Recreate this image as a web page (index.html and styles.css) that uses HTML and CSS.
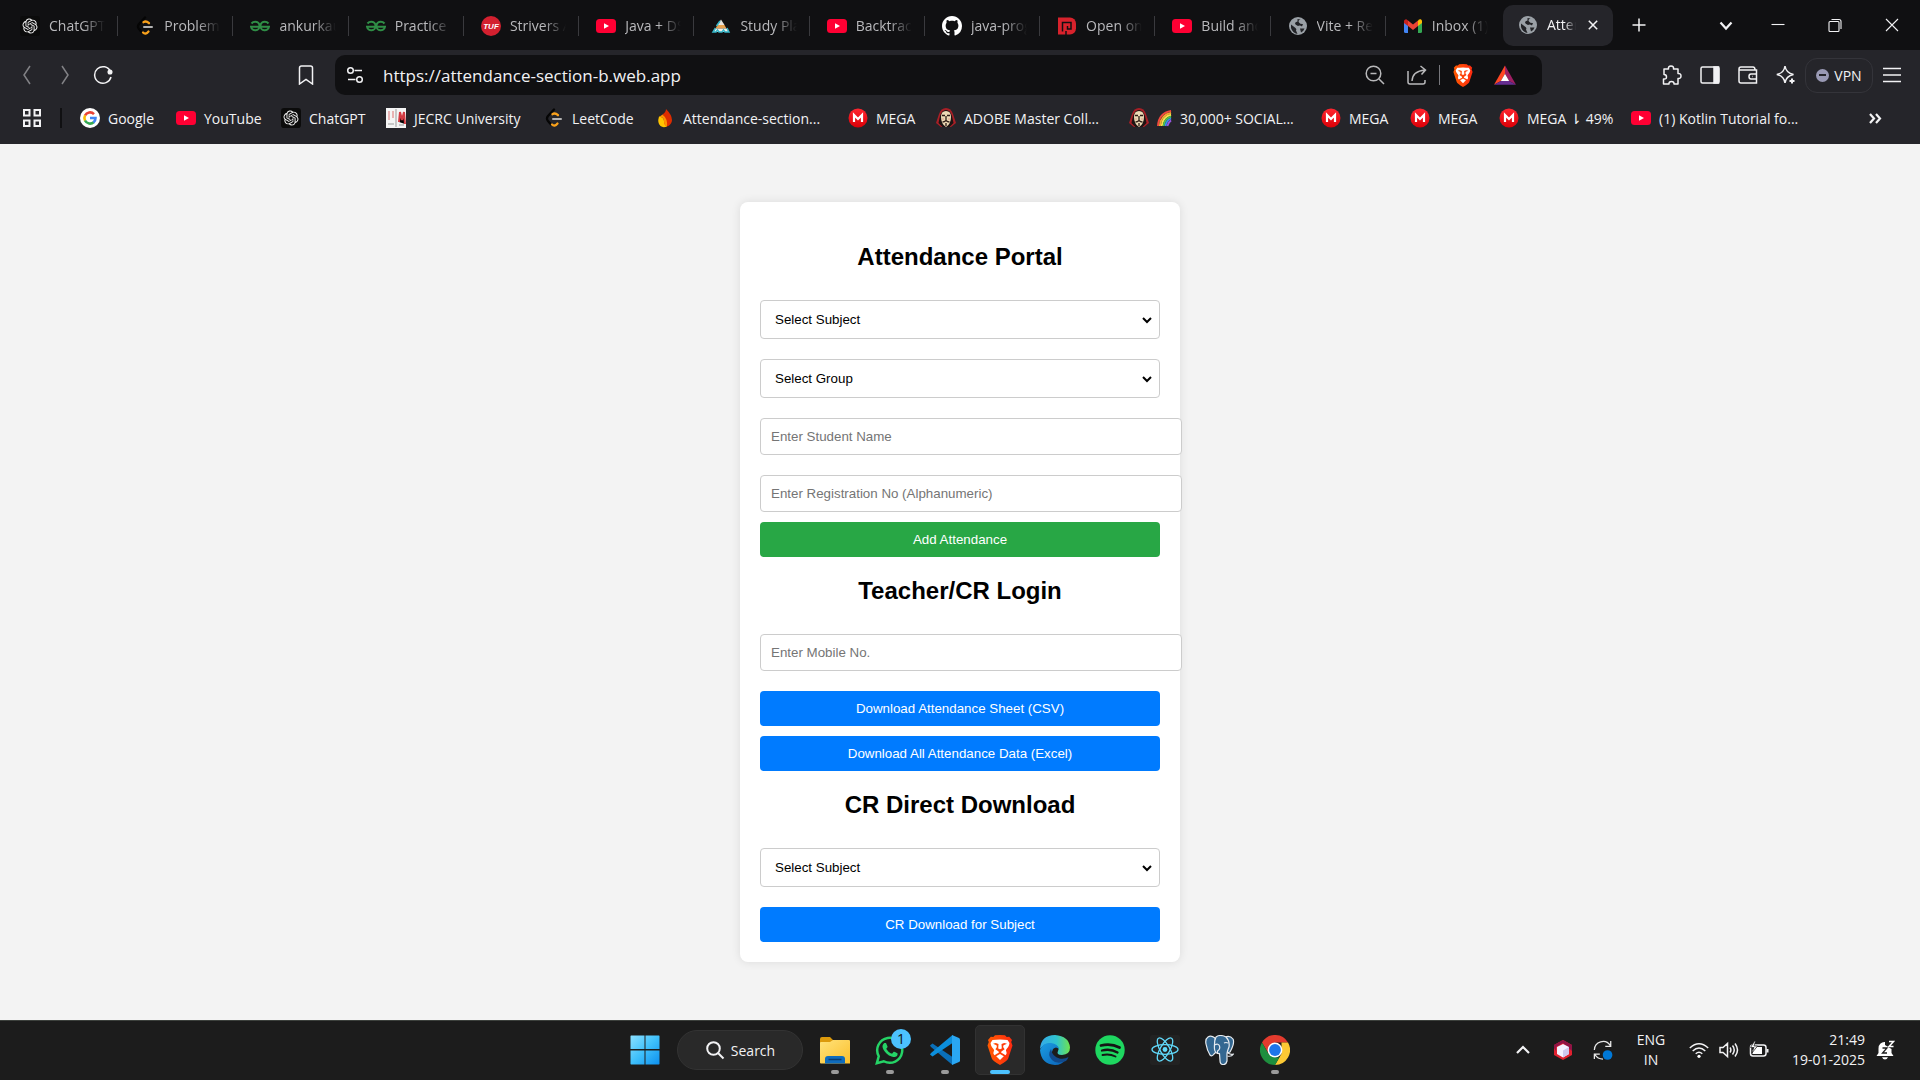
FILE: index.html
```html
<!DOCTYPE html>
<html lang="en">
<head>
<meta charset="utf-8">
<title>Attendance Portal</title>
<link rel="stylesheet" href="styles.css">
</head>
<body>
<svg class="sprite" aria-hidden="true">
  <defs>
    <linearGradient id="g-win" x1="0" y1="0" x2="1" y2="1"><stop offset="0" stop-color="#8be0ff"/><stop offset=".5" stop-color="#3fc0fb"/><stop offset="1" stop-color="#0d90ee"/></linearGradient>
    <linearGradient id="g-brave" x1="0" x2="1"><stop offset="0" stop-color="#ff5a00"/><stop offset="1" stop-color="#ff2a10"/></linearGradient>
    <linearGradient id="g-folder" x1="0" y1="0" x2="1" y2="1"><stop offset="0" stop-color="#ffe27a"/><stop offset="1" stop-color="#fbc02d"/></linearGradient>
    <linearGradient id="g-edge1" x1="0" y1="0" x2="1" y2="0"><stop offset="0" stop-color="#35a9e8"/><stop offset=".55" stop-color="#2fc3cf"/><stop offset="1" stop-color="#6fe34f"/></linearGradient>
    <linearGradient id="g-edge2" x1="0" y1="0" x2="1" y2="1"><stop offset="0" stop-color="#1b9de2"/><stop offset="1" stop-color="#0a62b8"/></linearGradient>
    <linearGradient id="g-mega" x1="0" y1="0" x2="0" y2="1"><stop offset="0" stop-color="#ff2630"/><stop offset="1" stop-color="#d90007"/></linearGradient>

    <symbol id="openai" viewBox="-4 -4 32 32"><rect x="-4" y="-4" width="32" height="32" rx="5" fill="#0b0b0b"/><path fill="#f2f2f2" d="M22.28 9.82a5.98 5.98 0 0 0-.52-4.91 6.05 6.05 0 0 0-6.51-2.9A6.07 6.07 0 0 0 4.98 4.18a5.98 5.98 0 0 0-4 2.9 6.05 6.05 0 0 0 .74 7.1 5.98 5.98 0 0 0 .51 4.91 6.05 6.05 0 0 0 6.52 2.9A5.98 5.98 0 0 0 13.26 24a6.06 6.06 0 0 0 5.77-4.2 5.99 5.99 0 0 0 4-2.9 6.06 6.06 0 0 0-.75-7.08zm-9.02 12.61a4.48 4.48 0 0 1-2.88-1.04l.14-.08 4.78-2.76a.8.8 0 0 0 .4-.68v-6.74l2.02 1.17a.07.07 0 0 1 .04.05v5.58a4.5 4.5 0 0 1-4.5 4.5zM3.6 18.3a4.47 4.47 0 0 1-.53-3.01l.14.08 4.78 2.76a.77.77 0 0 0 .78 0l5.85-3.37v2.33a.08.08 0 0 1-.04.07l-4.84 2.79A4.5 4.5 0 0 1 3.6 18.3zM2.34 7.9a4.49 4.49 0 0 1 2.37-1.98V11.6a.77.77 0 0 0 .38.68l5.82 3.35-2.02 1.17a.08.08 0 0 1-.07 0l-4.83-2.79A4.5 4.5 0 0 1 2.34 7.87zm16.6 3.85L13.1 8.36l2.02-1.16a.08.08 0 0 1 .07 0l4.83 2.79a4.49 4.49 0 0 1-.68 8.1v-5.67a.79.79 0 0 0-.4-.67zm2.01-3.02l-.14-.09-4.78-2.78a.78.78 0 0 0-.78 0L9.41 9.23V6.9a.07.07 0 0 1 .03-.06l4.83-2.79a4.5 4.5 0 0 1 6.68 4.66zM8.31 12.86l-2.02-1.16a.08.08 0 0 1-.04-.06V6.07a4.5 4.5 0 0 1 7.37-3.45l-.14.08L8.7 5.46a.8.8 0 0 0-.39.68zm1.1-2.36 2.6-1.5 2.6 1.5v3l-2.6 1.5-2.6-1.5z"/></symbol>
    <symbol id="leetcode" viewBox="0 0 20 20"><g fill="none" stroke-width="2.3" stroke-linecap="round"><path stroke="#050505" d="M10 1.5 4 8Q2 10.500 4 13l3 3.500"/><path stroke="#f9a11b" d="M8.500 6.200Q11 4.300 14 7.200M8 16.500Q10.500 19 13.500 15.500"/><path stroke="#b3b3b3" stroke-width="2" d="M9 11h8"/></g></symbol>
    <symbol id="gfg" viewBox="0 0 20 20"><g fill="none" stroke="#2f8d46" stroke-width="2"><path d="M1.500 7.500Q3 5.700 5.200 5.700a4.300 4.300 0 1 1-4.200 5H19a4.300 4.300 0 1 1-4.200-5Q17 5.700 18.500 7.500"/></g></symbol>
    <symbol id="tuf" viewBox="0 0 20 20"><circle cx="10" cy="10" r="10" fill="#d3202f"/><text x="10" y="13" text-anchor="middle" font-family="Liberation Sans" font-size="8" font-weight="700" font-style="italic" fill="#fff">TUF</text></symbol>
    <symbol id="youtube" viewBox="0 0 20 20"><rect y="3" width="20" height="14" rx="3.500" fill="#ff0033"/><path d="m8 7.300 5 2.700-5 2.700z" fill="#fff"/></symbol>
    <symbol id="pyramid" viewBox="0 0 20 20"><path d="M10 3.500 13.500 9h-7z" fill="#e9e4dc"/><path d="M6.500 9h7l2 3.500h-11z" fill="#e7a24f"/><path d="M4.500 12.500h11L18 16H2z" fill="#f4f1ea"/><path d="m9 5-3.500 5M4.500 12 2 16h3l1.500-2 1.500 2h3l1.500-2 1.500 2h4l-2-4" fill="none" stroke="#35b6c9" stroke-width="1.500"/></symbol>
    <symbol id="github" viewBox="0 0 16 16"><path fill="#fff" d="M8 0C3.580 0 0 3.580 0 8c0 3.540 2.290 6.530 5.470 7.590.4.070.55-.17.55-.38 0-.19-.01-.82-.01-1.490-2.010.37-2.530-.49-2.690-.94-.09-.23-.48-.94-.82-1.130-.28-.15-.68-.52-.01-.53.63-.01 1.080.58 1.230.82.72 1.210 1.870.87 2.330.66.07-.52.28-.87.51-1.070-1.780-.2-3.640-.89-3.640-3.950 0-.87.31-1.590.82-2.150-.08-.2-.36-1.020.08-2.120 0 0 .67-.21 2.200.82.64-.18 1.320-.27 2-.27s1.360.09 2 .27c1.530-1.040 2.200-.82 2.200-.82.44 1.100.16 1.920.08 2.120.51.56.82 1.270.82 2.150 0 3.070-1.870 3.750-3.650 3.950.29.25.54.73.54 1.480 0 1.070-.01 1.930-.01 2.200 0 .21.15.46.55.38A8.010 8.010 0 0 0 16 8c0-4.420-3.580-8-8-8z"/></symbol>
    <symbol id="pepcoding" viewBox="0 0 20 20"><path d="M1 1.500h12a6 6 0 0 1 6 6v5a6 6 0 0 1-6 6H1z" fill="#d8222c"/><path d="M5.500 15.500v-9H14v6.500h-3.500V10M9 19v-4" fill="none" stroke="#101012" stroke-width="1.500"/></symbol>
    <symbol id="globe" viewBox="0 0 20 20"><circle cx="10" cy="10" r="9" fill="#9aa0a6"/><path fill="#222327" d="M3 8.500 7.500 12q1.500 1 .5 2.500l1.500 3.400Q4.500 17 3 12zM9.500 3l3 .5q-3 1-1.500 3t4 1.500l-1 2.500q-2-1.500-4-.5-3-1.500-3-2.500 0-1.500 2.500-2z"/><path fill="#222327" d="M12 12.500h4.500q-1 3-3.500 4z"/></symbol>
    <symbol id="gmail" viewBox="0 0 20 20"><path fill="#4285f4" d="M1 6v9.500a1.500 1.500 0 0 0 1.500 1.500H5V9z"/><path fill="#34a853" d="M15 9v8h2.500a1.500 1.500 0 0 0 1.500-1.500V6z"/><path fill="#fbbc04" d="M15 4.500V10l4-3V5a2 2 0 0 0-3.300-1.300z"/><path fill="#ea4335" d="M5 10V4.500l5 4 5-4V10l-5 4z"/><path fill="#c5221f" d="M1 5v2l4 3V4.500l-.7-.6A2 2 0 0 0 1 5z"/></symbol>
    <symbol id="google" viewBox="0 0 20 20"><circle cx="10" cy="10" r="10" fill="#fff"/><g fill="none" stroke-width="2.600"><path stroke="#ea4335" d="M14 6.100A5.600 5.600 0 0 0 5 7.500"/><path stroke="#fbbc04" d="M5.100 7.300a5.600 5.600 0 0 0 0 5.400"/><path stroke="#34a853" d="M5 12.500a5.600 5.600 0 0 0 8.800 1.600"/><path stroke="#4285f4" d="M13.500 14.400a5.600 5.600 0 0 0 2-4.400H10"/></g></symbol>
    <symbol id="jecrc" viewBox="0 0 20 20"><path fill="#f5f5f5" d="M0 0h20v20H0z"/><path stroke="#e9b3b3" stroke-width="2" d="M3 3v9M7 3v7"/><path stroke="#d33b43" stroke-width="2" d="m13 14 1-10 2 8 2-8 1 12"/><path stroke="#b9b9b9" stroke-width="1.500" d="M2 16h6M10 1v18M13 17h5"/></symbol>
    <symbol id="firebase" viewBox="0 0 20 20"><path fill="#dd2c00" d="M11 1q6 6 6 11a6.500 6.500 0 0 1-9 6Q11 10 7.500 6.500 11 4 11 1z"/><path fill="#ffc400" d="M4 8.500Q9 9 9 13t3 5.500Q8 20 5.500 18 2 15 4 8.500z"/><path fill="#ff9100" d="M7.500 6.500Q6 8 4 8.500 9 9 9 13t3 5.500Q13 11 7.500 6.500z"/></symbol>
    <symbol id="mega" viewBox="0 0 20 20"><circle cx="10" cy="10" r="9.500" fill="url(#g-mega)"/><path fill="none" stroke="#fff" stroke-width="2.200" d="M6 14V7l4 4 4-4v7"/></symbol>
    <symbol id="mask" viewBox="0 0 20 20"><path fill="#a81f26" d="M10 0q5 0 7 6l3 9-5 4H5l-5-4 3-9q2-6 7-6z"/><path fill="#1c1413" d="M10 2q4 0 6 6l1.500 7-4 4h-7l-4-4L4 8q2-6 6-6z"/><path fill="#ecd9b4" d="M10 3q5 0 5 6 0 7-5 10-5-3-5-10 0-6 5-6z"/><path stroke="#2c1b16" stroke-width="1.300" fill="none" d="M6 7.500h3m2 0h3M6.500 14q2 0 3.500-1.500 1.500 1.500 3.500 1.500M10 8v4M10 15v3"/><path stroke="#c66" d="M6.500 11h1m5 0h1"/></symbol>
    <symbol id="rainbow" viewBox="0 0 16 18"><g fill="none" stroke-width="2"><path stroke="#f0483e" d="M1 17Q2 3 15 1"/><path stroke="#f8a530" d="M3 17Q4 5 15 3"/><path stroke="#f7e04b" d="M5 17Q6 7 15 5"/><path stroke="#49c552" d="M7 17Q8 9 15 7"/><path stroke="#3b8ff3" d="M9 17q1-6 6-8"/><path stroke="#9656e0" d="M11 17q1-4 4-6"/></g></symbol>

    <symbol id="lion" viewBox="0 0 26 30"><path d="m13 0 5 .2 1.700 1.800 2.500-.2L25 5l-.8 2 1.300 3.500-4.300 13Q20.500 25.500 13 30q-7.500-4.500-8.200-6.500L.5 10.500 1.800 7 1 5l2.800-3.200 2.500.2L8 .2z" fill="url(#g-brave)"/><path fill="#fff" d="m13 4.500 4 .3 3.500.2 2 3-.5 2.200q-.3 1.300-2.800 4.300-.7 1 .3 2.500.6 1.800-1 3.200l-2.300-1.400-2-1 .2-1.200 3.200-2.300-1.500-2.300.4-1.800 3.500-1.500-2.800-.6L14.500 9l.3 4.500-1.800.8-1.800-.8.3-4.500-2.700-.9-2.800.6L9.500 10.200l.4 1.800-1.500 2.300 3.200 2.300.2 1.200-2 1-2.300 1.400q-1.600-1.400-1-3.200 1-1.500.3-2.500Q4.300 11.500 4 10.200L3.500 8l2-3 3.500-.2z"/><path fill="#fff" d="m13 19 3.800 2.300L13 25l-3.800-3.700z"/></symbol>
    <symbol id="bat" viewBox="0 0 24 22"><path fill="#ff4724" d="M12 0 0 21l7.500-4L12 9z"/><path fill="#9e1f63" d="m12 0 12 21-7.500-4L12 9z"/><path fill="#662d91" d="M0 21h24l-7.500-4h-9z"/><path fill="#fff" d="m12 9 4.500 8h-9z"/></symbol>

    <symbol id="back" viewBox="0 0 20 20"><path d="M13 1 7 10l6 9"/></symbol>
    <symbol id="forward" viewBox="0 0 20 20"><path d="m7 1 6 9-6 9"/></symbol>
    <symbol id="reload" viewBox="0 0 20 20"><path d="M17.500 6.500A8.300 8.300 0 1 0 18 12"/><circle cx="17" cy="7" r="1.800" fill="#f2f2f4"/></symbol>
    <symbol id="flag" viewBox="0 0 20 20"><path d="M3.500 3q0-2 2-2h9q2 0 2 2v16L10 14.500 3.500 19z"/></symbol>
    <symbol id="sliders" viewBox="0 0 20 20"><circle cx="5.500" cy="5.500" r="2.800"/><path d="M9.500 5.500H17"/><circle cx="14.500" cy="14.500" r="2.800"/><path d="M3 14.500h7.500"/></symbol>
    <symbol id="zoomout" viewBox="0 0 20 20"><circle cx="8.500" cy="8.500" r="7.300"/><path d="m14 14 5 5M5.500 8.500h6"/></symbol>
    <symbol id="share" viewBox="0 0 20 20"><path d="M1 6v11q0 2 2 2h13q2 0 2-2v-2M5 16q.5-10 13-11M13.500 1 18.500 5l-4 4.500"/></symbol>
    <symbol id="puzzle" viewBox="0 0 20 20"><path stroke-linejoin="round" d="M2 4h4.500q-.5-3 2.500-3t2.500 3H16v4.500q3-.2 3 2.500t-3 2.500V19h-4q.2-2.500-2.500-2.500T7 19H1.500v-5q3 .5 3-2T2 9.500z"/></symbol>
    <symbol id="panel" viewBox="0 0 20 20"><rect x="1" y="2" width="18" height="16" rx="1.500"/><path d="M14 2h4.500v16H14z" fill="#f2f2f4"/></symbol>
    <symbol id="wallet" viewBox="0 0 20 20"><path d="M1 4q0-2 2-2h12q2 0 2 3h1.500V18H3q-2 0-2-2zM1 5h16M19 9h-6q-2 0-2 2.500T13 14h6M14 11.500h.5"/></symbol>
    <symbol id="sparkle" viewBox="0 0 20 20"><path d="M9 1q1 7 8.500 8.500Q10 11 9 18 8 11 .8 9.500 8 8 9 1z"/><path d="M16 13.500v5M13.500 16h5" stroke-width="2"/></symbol>
    <symbol id="menu" viewBox="0 0 20 20"><path d="M1 3.500h18M1 10h18M1 16.500h18"/></symbol>
    <symbol id="apps" viewBox="0 0 20 20"><path d="M2 2h5.500v5.500H2zM12.500 2H18v5.500h-5.500zM2 12.500h5.500V18H2zM12.500 12.500H18V18h-5.500z" stroke-width="2"/></symbol>
    <symbol id="more" viewBox="0 0 20 20"><path d="m5 6 4 4.500L5 15m6-9 4 4.500-4 4.500"/></symbol>
    <symbol id="plus" viewBox="0 0 20 20"><path d="M10 3.500v13M3.500 10h13"/></symbol>
    <symbol id="down" viewBox="0 0 20 20"><path d="m4.500 7.500 5.500 6 5.500-6"/></symbol>
    <symbol id="up" viewBox="0 0 20 20"><path d="m4 13 6-6 6 6"/></symbol>
    <symbol id="minimize" viewBox="0 0 20 20"><path d="M3.500 9.500h13"/></symbol>
    <symbol id="restore" viewBox="0 0 20 20"><rect x="4" y="6.500" width="10" height="10" rx="1"/><path d="M6.500 4.500H14q2 0 2 2V14"/></symbol>
    <symbol id="close" viewBox="0 0 20 20"><path d="m4 4 12 12M16 4 4 16"/></symbol>

    <symbol id="windows" viewBox="0 0 30 30"><path fill="url(#g-win)" d="M1 .5h13.500V14H.5V1zM15.500.5H29L29.500 1v13h-14zM.5 15.500h14V29.500H1l-.5-.5zM15.500 15.500h14V29l-.5.5H15.500z"/></symbol>
    <symbol id="explorer" viewBox="0 0 30 30"><path fill="#dc9a0c" d="M0 4q0-2 2-2h8l3 3h15v6H0z"/><path fill="url(#g-folder)" d="M0 8q0-1 1-1h9l3-2h16q1 0 1 1v22.500H1q-1 0-1-1z"/><path fill="#0f6cbd" d="M5 28.500V24q0-3 3-3h14q3 0 3 3v4.500z"/><path stroke="#0a3d73" stroke-width="1.500" d="M8.500 24.500h13"/></symbol>
    <symbol id="whatsapp" viewBox="0 0 24 24"><path fill="none" stroke="#25d366" stroke-width="2" d="M1.500 22.500 3 17a10 10 0 1 1 4 4z"/><path fill="#25d366" d="M17.472 14.382c-.297-.149-1.758-.867-2.030-.967-.273-.099-.471-.148-.670.150-.197.297-.767.966-.940 1.164-.173.199-.347.223-.644.075-.297-.150-1.255-.463-2.390-1.475-.883-.788-1.480-1.761-1.653-2.059-.173-.297-.018-.458.130-.606.134-.133.298-.347.446-.520.149-.174.198-.298.298-.497.099-.198.050-.371-.025-.520-.075-.149-.669-1.612-.916-2.207-.242-.579-.487-.5-.669-.510-.173-.008-.371-.010-.570-.010-.198 0-.520.074-.792.372-.272.297-1.040 1.016-1.040 2.479 0 1.462 1.065 2.875 1.213 3.074.149.198 2.096 3.200 5.077 4.487.709.306 1.262.489 1.694.625.712.227 1.360.195 1.871.118.571-.085 1.758-.719 2.006-1.413.248-.694.248-1.289.173-1.413-.074-.124-.272-.198-.570-.347"/></symbol>
    <symbol id="vscode" viewBox="0 0 30 30"><path fill="#0a6fb8" d="M0 10.500 2.500 8.500l20 13.500v8L1 12z"/><path fill="#0c8fdc" d="M0 19.500 2.500 21.500 22.500 8V0L1 18z"/><path fill="#2aa7f3" d="m22 0 7 3q1 .5 1 1.500v21q0 1-1 1.500l-7 3z"/></symbol>
    <symbol id="edge" viewBox="0 0 30 30"><path fill="url(#g-edge1)" d="M0 14Q1 0 15 0q14 1 15 12.500 0 7-8 7.500-6 0-4-4 2-3.500-3-6Q6 6 0 14z"/><path fill="url(#g-edge2)" d="M0 15Q3 7 11 8q7 1 8 6-3-3-6 0-3 6 2 10 5 3 11 0-4 6-11 6Q1 29 0 15z"/><path fill="#114a8c" d="M11 14q-4 6 1 11t14 1q2-2 2.500-4-4 2.500-9 1.500-7-1.500-8.500-9.500z"/></symbol>
    <symbol id="spotify" viewBox="0 0 30 30"><circle cx="15" cy="15" r="14.700" fill="#1ed760"/><path fill="none" stroke="#151515" stroke-linecap="round" d="M6 10.500q10-2.500 18.500 2" stroke-width="2.800"/><path fill="none" stroke="#151515" stroke-linecap="round" d="M7 15.500q8.500-2.200 15.500 2" stroke-width="2.300"/><path fill="none" stroke="#151515" stroke-linecap="round" d="M7.500 20q7-1.500 13 1.500" stroke-width="1.900"/></symbol>
    <symbol id="react" viewBox="0 0 30 30"><rect width="30" height="30" rx="2" fill="#222"/><g fill="none" stroke="#61dafb" stroke-width="1.300"><ellipse cx="15" cy="14.500" rx="13" ry="4.800"/><ellipse cx="15" cy="14.500" rx="13" ry="4.800" transform="rotate(60 15 14.500)"/><ellipse cx="15" cy="14.500" rx="13" ry="4.800" transform="rotate(120 15 14.500)"/></g><circle cx="15" cy="14.500" r="2.400" fill="#61dafb"/></symbol>
    <symbol id="postgres" viewBox="0 0 30 30"><g fill="#336791" stroke="#e6ebf0" stroke-width="1.200" stroke-linejoin="round"><path d="M10 3Q6 0 3 2 0 4 1 9q1 6 4 11 2 2 4-1l2-2z"/><path d="M20 2q5-2 8 2 2 4-3 13l-3 1z"/><path d="M11 2q4-3 10 0 4 4 3 10-2 5-2 7v7q-1 4-4 3.500-3 0-3-4l-.5-7Q10 19 9.500 14 9 6 11 2z"/><path fill="none" d="M23 18q3 2 5.500 1-2 3-6 2M9.500 10q4-2 5 1t-2 5v3M19 8q2-1 4 0"/></g></symbol>
    <symbol id="chrome" viewBox="0 0 30 30"><path fill="#e33b2e" d="M2 7.500A15 15 0 0 1 28 7.500H15l-6.500 11z"/><path fill="#fcc934" d="M28 7.500A15 15 0 0 1 15 30l6.500-11.300V7.500z"/><path fill="#1e8e3e" d="M2 7.500 8.500 18.700 15 22.500h4.300L15 30A15 15 0 0 1 2 7.500z"/><circle cx="15" cy="15" r="7.400" fill="#fff"/><circle cx="15" cy="15" r="5.900" fill="#1f75ea"/></symbol>
    <symbol id="find" viewBox="0 0 20 20"><circle cx="8.500" cy="8.500" r="6.300"/><path d="m13 13 5.500 5.500"/></symbol>

    <symbol id="cube" viewBox="0 0 20 20"><path fill="#e0202e" d="m10 0 9 5v10l-9 5-9-5V5z"/><path fill="#8f1446" d="m10 0 9 5v6L10 3 3 7v4L1 8V5z"/><path fill="#f4f1ff" d="m10 4 6 3v7l-6 3.500L4 14V7z"/><path fill="#cfc8ee" d="m10 10.500 6-3.500v7l-6 3.500z"/></symbol>
    <symbol id="sync" viewBox="0 0 22 22"><g fill="none" stroke="#e8e8e8" stroke-width="1.400"><path d="M1.500 11A9.500 9.500 0 0 1 19 6M19.500 1v6h-6"/><path d="M1.500 21v-5.500h6M2 16q3 5 9 5"/></g><circle cx="16" cy="16.500" r="5.300" fill="#0078d7"/></symbol>
    <symbol id="wifi" viewBox="0 0 20 20"><path d="M.8 8q9.200-8.500 18.400 0M3.700 11q6.300-6 12.600 0M6.700 13.800q3.300-3 6.600 0"/><circle cx="10" cy="16.300" r="1.600" fill="#fff" stroke="none"/></symbol>
    <symbol id="volume" viewBox="0 0 20 20"><path d="M1 7.500h3L8.500 3.500v13L4 12.500H1zM11 7.500q1.800 2.500 0 5M13.500 5.500q3.500 4.500 0 9M16 3.500q5 6.500 0 13"/></symbol>
    <symbol id="battery" viewBox="0 0 20 20"><rect x="1.500" y="5" width="15.500" height="11" rx="2.500"/><path d="M18.500 9v3.500" stroke-width="2"/><path fill="#fff" stroke="none" d="M3.500 10 8 7h5v7H3.500z"/><path d="m5.500 1-4 6.500h3.500L3 13l5.500-7H5L6.500 1z" fill="#fff" stroke="#1c1c1c" stroke-width=".7"/></symbol>
    <symbol id="bell" viewBox="0 0 20 20"><path fill="#fff" d="M10 2a6 6 0 0 0-6.500 6.500V13L1.500 16h17l-2-3V9L10 5zM7 17.200h6q-1 2.300-3 2.300t-3-2.300z"/><path d="M7.500 8h4.500l-4.500 5H12" fill="none" stroke="#1c1c1c" stroke-width="1.300"/><path fill="none" stroke="#fff" stroke-width="1.500" d="M14 1.500h4.500L14 6.500h4.500"/></symbol>
  </defs>
</svg>

<header class="browser">
  <div class="titlebar">
    <div class="tabs">
      <button class="tab"><svg class="favicon"><use href="#openai"/></svg><span class="tab-title">ChatGPT</span></button>
      <button class="tab"><svg class="favicon"><use href="#leetcode"/></svg><span class="tab-title">Problems</span></button>
      <button class="tab"><svg class="favicon"><use href="#gfg"/></svg><span class="tab-title">ankurkaushal</span></button>
      <button class="tab"><svg class="favicon"><use href="#gfg"/></svg><span class="tab-title">Practice |</span></button>
      <button class="tab"><svg class="favicon"><use href="#tuf"/></svg><span class="tab-title">Strivers A2Z</span></button>
      <button class="tab"><svg class="favicon"><use href="#youtube"/></svg><span class="tab-title">Java + DSA</span></button>
      <button class="tab"><svg class="favicon"><use href="#pyramid"/></svg><span class="tab-title">Study Plan</span></button>
      <button class="tab"><svg class="favicon"><use href="#youtube"/></svg><span class="tab-title">Backtracking</span></button>
      <button class="tab"><svg class="favicon"><use href="#github"/></svg><span class="tab-title">java-programs</span></button>
      <button class="tab"><svg class="favicon"><use href="#pepcoding"/></svg><span class="tab-title">Open on</span></button>
      <button class="tab"><svg class="favicon"><use href="#youtube"/></svg><span class="tab-title">Build and</span></button>
      <button class="tab"><svg class="favicon"><use href="#globe"/></svg><span class="tab-title">Vite + React</span></button>
      <button class="tab"><svg class="favicon"><use href="#gmail"/></svg><span class="tab-title">Inbox (1)</span></button>
    </div>
    <div class="tab-active"><svg class="favicon"><use href="#globe"/></svg><span class="tab-title">Attendance</span><button class="tab-close" aria-label="Close tab"><svg class="stroke bold small"><use href="#close"/></svg></button></div>
    <button class="new-tab" aria-label="New tab"><svg class="stroke"><use href="#plus"/></svg></button>
    <button class="tab-search" aria-label="Search tabs"><svg class="stroke bold"><use href="#down"/></svg></button>
    <div class="window-buttons">
      <button aria-label="Minimize"><svg class="stroke thin"><use href="#minimize"/></svg></button>
      <button aria-label="Restore"><svg class="stroke thin"><use href="#restore"/></svg></button>
      <button aria-label="Close"><svg class="stroke thin"><use href="#close"/></svg></button>
    </div>
  </div>

  <div class="navbar">
    <div class="nav-left">
      <button class="nav-button dim" aria-label="Back"><svg class="stroke"><use href="#back"/></svg></button>
      <button class="nav-button dim" aria-label="Forward"><svg class="stroke"><use href="#forward"/></svg></button>
      <button class="nav-button" aria-label="Reload"><svg class="stroke"><use href="#reload"/></svg></button>
      <button class="nav-button push" aria-label="Bookmark"><svg class="stroke"><use href="#flag"/></svg></button>
    </div>
    <div class="address">
      <svg class="stroke"><use href="#sliders"/></svg>
      <input class="url" type="text" aria-label="Address" value="https://attendance-section-b.web.app">
      <button class="address-button muted" aria-label="Zoom"><svg class="stroke"><use href="#zoomout"/></svg></button>
      <button class="address-button muted" aria-label="Share"><svg class="stroke"><use href="#share"/></svg></button>
      <span class="address-divider"></span>
      <button class="address-button" aria-label="Shields"><svg class="shield"><use href="#lion"/></svg></button>
      <button class="address-button" aria-label="Rewards"><svg class="shield"><use href="#bat"/></svg></button>
    </div>
    <div class="nav-right">
      <button class="nav-tool" aria-label="Extensions"><svg class="stroke"><use href="#puzzle"/></svg></button>
      <button class="nav-tool" aria-label="Sidebar"><svg class="stroke"><use href="#panel"/></svg></button>
      <button class="nav-tool" aria-label="Wallet"><svg class="stroke"><use href="#wallet"/></svg></button>
      <button class="nav-tool" aria-label="Leo"><svg class="stroke"><use href="#sparkle"/></svg></button>
      <button class="vpn"><span class="vpn-dot"></span>VPN</button>
      <button class="nav-button" aria-label="Menu"><svg class="stroke"><use href="#menu"/></svg></button>
    </div>
  </div>

  <nav class="bookmarks">
    <button class="apps" aria-label="Apps"><svg class="stroke"><use href="#apps"/></svg></button>
    <span class="bookmark-divider"></span>
    <div class="bookmark-list">
      <a href="#"><svg class="favicon"><use href="#google"/></svg>Google</a>
      <a href="#"><svg class="favicon"><use href="#youtube"/></svg>YouTube</a>
      <a href="#"><svg class="favicon"><use href="#openai"/></svg>ChatGPT</a>
      <a href="#"><svg class="favicon"><use href="#jecrc"/></svg>JECRC University</a>
      <a href="#"><svg class="favicon"><use href="#leetcode"/></svg>LeetCode</a>
      <a href="#"><svg class="favicon"><use href="#firebase"/></svg>Attendance-section...</a>
      <a href="#"><svg class="favicon"><use href="#mega"/></svg>MEGA</a>
      <a href="#"><svg class="favicon"><use href="#mask"/></svg>ADOBE Master Coll...</a>
      <a href="#"><svg class="favicon"><use href="#mask"/></svg><svg class="rainbow"><use href="#rainbow"/></svg>30,000+ SOCIAL...</a>
      <a href="#"><svg class="favicon"><use href="#mega"/></svg>MEGA</a>
      <a href="#"><svg class="favicon"><use href="#mega"/></svg>MEGA</a>
      <a href="#"><svg class="favicon"><use href="#mega"/></svg>MEGA ⇂ 49%</a>
      <a href="#"><svg class="favicon"><use href="#youtube"/></svg>(1) Kotlin Tutorial fo...</a>
    </div>
    <button class="apps" aria-label="More bookmarks"><svg class="stroke bold"><use href="#more"/></svg></button>
  </nav>
</header>

<main class="page">
  <form class="card">
    <h2>Attendance Portal</h2>
    <select aria-label="Subject"><option>Select Subject</option></select>
    <select aria-label="Group"><option>Select Group</option></select>
    <input type="text" aria-label="Student name" placeholder="Enter Student Name">
    <input class="last" type="text" aria-label="Registration number" placeholder="Enter Registration No (Alphanumeric)">
    <button class="add" type="button">Add Attendance</button>
    <h2>Teacher/CR Login</h2>
    <input type="text" aria-label="Mobile number" placeholder="Enter Mobile No.">
    <button type="button">Download Attendance Sheet (CSV)</button>
    <button type="button">Download All Attendance Data (Excel)</button>
    <h2>CR Direct Download</h2>
    <select aria-label="Subject to download"><option>Select Subject</option></select>
    <button type="button">CR Download for Subject</button>
  </form>
</main>

<footer class="taskbar">
  <div class="apps-row">
    <button class="app" aria-label="Start"><svg class="app-icon"><use href="#windows"/></svg></button>
    <button class="search"><svg class="stroke search-icon"><use href="#find"/></svg>Search</button>
    <button class="app running" aria-label="File Explorer"><svg class="app-icon"><use href="#explorer"/></svg></button>
    <button class="app running" aria-label="WhatsApp"><svg class="app-icon"><use href="#whatsapp"/></svg><span class="badge">1</span></button>
    <button class="app running" aria-label="Visual Studio Code"><svg class="app-icon"><use href="#vscode"/></svg></button>
    <button class="app running current" aria-label="Brave"><svg class="app-icon"><use href="#lion"/></svg></button>
    <button class="app" aria-label="Edge"><svg class="app-icon"><use href="#edge"/></svg></button>
    <button class="app" aria-label="Spotify"><svg class="app-icon"><use href="#spotify"/></svg></button>
    <button class="app" aria-label="React"><svg class="app-icon"><use href="#react"/></svg></button>
    <button class="app" aria-label="PostgreSQL"><svg class="app-icon"><use href="#postgres"/></svg></button>
    <button class="app running" aria-label="Chrome"><svg class="app-icon"><use href="#chrome"/></svg></button>
  </div>
  <div class="tray">
    <button class="tray-item" aria-label="Hidden icons"><svg class="stroke bold"><use href="#up"/></svg></button>
    <button class="tray-item" aria-label="Cube"><svg class="favicon"><use href="#cube"/></svg></button>
    <button class="tray-item" aria-label="Sync"><svg class="favicon"><use href="#sync"/></svg></button>
    <button class="language">ENG<br>IN</button>
    <button class="status" aria-label="Network, volume, battery"><svg class="stroke"><use href="#wifi"/></svg><svg class="stroke"><use href="#volume"/></svg><svg class="stroke"><use href="#battery"/></svg></button>
    <button class="clock">21:49<br>19-01-2025</button>
    <button class="bell" aria-label="Notifications"><svg class="favicon"><use href="#bell"/></svg></button>
  </div>
</footer>
</body>
</html>
```
FILE: styles.css
```css
* { box-sizing: border-box; }

body {
  margin: 0;
  min-height: 100vh;
  display: flex;
  flex-direction: column;
  background: #f3f3f3;
  font-family: Arial, "Liberation Sans", sans-serif;
}

.sprite { position: absolute; width: 0; height: 0; }

/* Browser and taskbar share the system look */
.browser,
.taskbar {
  font-family: "Open Sans", sans-serif;
  font-size: 14px;
  color: #f2f2f4;
}

.browser button,
.taskbar button {
  display: flex;
  align-items: center;
  justify-content: center;
  padding: 0;
  border: 0;
  background: none;
  color: inherit;
  font: inherit;
}

.favicon { width: 20px; height: 20px; flex: none; }

.stroke {
  width: 20px;
  height: 20px;
  flex: none;
  fill: none;
  stroke: currentColor;
  stroke-width: 1.5;
}
.stroke.bold { stroke-width: 2.2; }
.stroke.thin { stroke-width: 1.1; }
.stroke.small { width: 14px; height: 14px; }

/* Tab strip */
.titlebar { display: flex; align-items: center; height: 50px; background: #101012; }
.tabs { display: flex; flex: 1; min-width: 0; padding: 1px 2px 0 3px; }

.browser .tab {
  flex: 1 1 0;
  min-width: 0;
  height: 20px;
  justify-content: flex-start;
  gap: 9px;
  padding: 0 12px 0 17px;
  border-right: 1px solid #3a3a3e;
  color: #b9b9bc;
}
.browser .tab:last-child { border-color: transparent; }

.tab-title {
  flex: 1;
  min-width: 0;
  overflow: hidden;
  white-space: nowrap;
  text-align: left;
  line-height: 20px;
  mask-image: linear-gradient(to right, #000 60%, transparent);
}

.tab-active {
  display: flex;
  align-items: center;
  gap: 9px;
  width: 110px;
  height: 41px;
  padding: 0 12px 0 15px;
  border-radius: 10px;
  background: #25252a;
}
.tab-close { width: 16px; height: 20px; }
.new-tab { width: 40px; height: 40px; margin: 0 47px 0 6px; }
.tab-search { width: 40px; height: 40px; margin-right: 3px; }
.window-buttons { display: flex; }
.window-buttons button { width: 57px; height: 50px; }

/* Address row */
.navbar { display: flex; align-items: center; height: 50px; background: #25252a; }
.nav-left { display: flex; gap: 2px; width: 335px; padding: 0 11px 0 9px; }
.nav-button { width: 36px; height: 36px; }
.dim { opacity: 0.45; }
.push { margin-left: auto; }

.address {
  display: flex;
  align-items: center;
  flex: 1;
  height: 40px;
  padding: 0 16px 0 10px;
  border-radius: 10px;
  background: #101012;
}
.url {
  flex: 1;
  min-width: 0;
  height: 30px;
  margin-left: 18px;
  padding: 0;
  border: 0;
  background: none;
  color: #f2f2f4;
  font: 17px "Open Sans", sans-serif;
}
.address-button { width: 42px; height: 36px; }
.muted { opacity: 0.75; }
.shield { width: 22px; height: 23px; }
.address-divider { width: 1px; height: 20px; margin: 0 2px 0 1px; background: #77777c; }

.nav-right { display: flex; align-items: center; justify-content: flex-end; width: 378px; padding-right: 10px; }
.nav-tool { width: 38px; height: 36px; }
.browser .vpn {
  gap: 5px;
  width: 68px;
  height: 35px;
  margin-right: 1px;
  border: 1px solid #34343a;
  border-radius: 12px;
}
.vpn-dot {
  display: flex;
  align-items: center;
  width: 13px;
  height: 13px;
  padding: 0 3px;
  border-radius: 50%;
  background: #9a9ab5;
}
.vpn-dot::before { content: ""; width: 7px; height: 2px; background: #25252a; }

/* Bookmarks */
.bookmarks { display: flex; align-items: center; height: 44px; padding: 0 27px 8px 14px; background: #25252a; }
.apps { width: 36px; height: 36px; }
.bookmark-divider { width: 2px; height: 20px; margin: 0 18px 0 10px; background: #101012; }
.bookmark-list {
  display: grid;
  flex: 1;
  grid-template-columns: 96px 105px 105px 158px 111px 193px 88px 193px 192px 89px 89px 132px auto;
}
.bookmark-list a {
  display: flex;
  align-items: center;
  gap: 8px;
  color: inherit;
  text-decoration: none;
  white-space: nowrap;
}
.rainbow { width: 15px; height: 17px; }

/* Portal */
.page { flex: 1; display: flex; justify-content: center; align-items: flex-start; padding: 58px 20px 40px; }

.card {
  width: 440px;
  padding: 21px 20px 20px;
  border-radius: 8px;
  background: #fff;
  box-shadow: 0 0 10px rgba(0, 0, 0, 0.1);
}
.card h2 { margin: 20px 0 30px; font-size: 24px; line-height: 27px; text-align: center; }
.card select,
.card input,
.card button { display: block; border-radius: 4px; }
.card select,
.card input { margin: 0 0 20px; padding: 10px; border: 1px solid #ccc; background: #fff; }
.card select {
  width: 100%;
  height: 39px;
  padding-left: 14px;
  appearance: none;
  background: #fff url("data:image/svg+xml,%3Csvg xmlns='http://www.w3.org/2000/svg' width='10' height='8'%3E%3Cpath d='M1 2l4 4 4-4' fill='none' stroke='%23000' stroke-width='2'/%3E%3C/svg%3E") no-repeat right 7px center;
}
.card input { width: 422px; height: 37px; }
.card .last { margin-bottom: 10px; }
.card button {
  width: 100%;
  height: 35px;
  margin-top: 10px;
  padding: 10px;
  border: 0;
  background: #007bff;
  color: #fff;
}
.card .add { background: #28a745; }

/* Taskbar */
.taskbar {
  display: grid;
  grid-template-columns: 1fr auto 1fr;
  align-items: center;
  height: 60px;
  background: #1c1c1c;
  box-shadow: inset 0 1px #3c403c;
}
.apps-row { display: flex; grid-column: 2; align-items: center; gap: 5px; }
.taskbar .app { position: relative; width: 50px; height: 50px; border: 1px solid transparent; border-radius: 5px; }
.app-icon { width: 30px; height: 30px; }
.taskbar .current { border-color: #323232; background: #292929; }
.running::after {
  content: "";
  position: absolute;
  bottom: 0;
  left: 50%;
  width: 8px;
  height: 4px;
  margin-left: -4px;
  border-radius: 2px;
  background: #9a9a9a;
}
.current::after { width: 20px; margin-left: -10px; background: #4cc2ff; }
.badge {
  position: absolute;
  top: 3px;
  right: 3px;
  width: 20px;
  height: 20px;
  border-radius: 50%;
  background: #4cc2ff;
  color: #111;
  font-size: 14px;
  line-height: 20px;
}
.taskbar .search {
  gap: 6px;
  width: 126px;
  height: 40px;
  margin: 0 2px;
  border: 1px solid #333;
  border-radius: 20px;
  background: #292929;
}
.search-icon { stroke-width: 2; }
.tray { display: flex; align-items: center; justify-content: flex-end; padding-right: 15px; line-height: 20px; }
.tray-item { width: 40px; height: 40px; }
.taskbar .language { width: 56px; }
.taskbar .status { gap: 10px; width: 100px; }
.taskbar .clock { width: 86px; justify-content: flex-end; text-align: right; }
.taskbar .bell { width: 40px; }
```
